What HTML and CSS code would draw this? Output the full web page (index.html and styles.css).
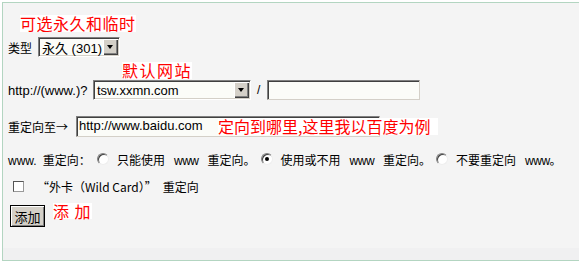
FILE: index.html
```html
<html>
  <head>
    <link rel="stylesheet" href="styles.css">
  </head>
  <body>
    <div class="panel">
      <div class="tip tip_type">可选永久和临时</div>

      <div class="row row_type">
        <span class="label label_type">类型</span>
        <span class="select select_type">
          <span class="select_text">永久 (301)</span>
          <span class="select_btn"></span>
        </span>
      </div><!-- row_type -->

      <div class="tip tip_site">默认网站</div>

      <div class="row row_host">
        <span class="label label_host">http://(www.)?</span>
        <span class="select select_host">
          <span class="select_text">tsw.xxmn.com</span>
          <span class="select_btn"></span>
        </span>
        <span class="slash">/</span>
        <span class="textbox textbox_path"></span>
      </div><!-- row_host -->

      <div class="row row_target">
        <span class="label label_target">重定向至→</span>
        <span class="textbox textbox_target">http://www.baidu.com</span>
        <span class="tip tip_target">定向到哪里,这里我以百度为例</span>
      </div><!-- row_target -->

      <div class="row row_www">
        <span class="opt_title">www.<span class="gap"></span>重定向：</span>
        <span class="radio"></span>
        <span class="opt">只能使用<span class="www">www</span>重定向。</span>
        <span class="radio radio_on"></span>
        <span class="opt">使用或不用<span class="www">www</span>重定向。</span>
        <span class="radio"></span>
        <span class="opt">不要重定向<span class="www">www。</span></span>
      </div><!-- row_www -->

      <div class="row row_wild">
        <span class="checkbox"></span>
        <span class="wild_text">“外卡（Wild Card）”<span class="gap"></span>重定向</span>
      </div><!-- row_wild -->

      <div class="row row_submit">
        <button class="button">添加</button>
        <span class="tip tip_submit">添 加</span>
      </div><!-- row_submit -->
    </div><!-- panel -->
  </body>
</html>
```

FILE: styles.css
```css
body { margin: 0; background: #fff; color: #000; font-family: "Liberation Sans", "Noto Sans CJK SC", sans-serif; font-size: 12px; }

.panel { margin: 2px 0 0 2px; height: 257px; border: 1px solid #b3d5c1; border-right: 0; background: linear-gradient(#f4f4f4 245px, #f0f0f1 245px); }

.tip { width: fit-content; background: #fff; color: #f00; font-family: "Noto Sans CJK SC", sans-serif; font-size: 16px; line-height: 17px; }
.tip_type { margin: 12px 0 0 17px; letter-spacing: 0.5px; }
.tip_site { margin: 5px 0 0 119px; letter-spacing: 1.5px; }
.tip_target { position: absolute; left: 215px; top: 2px; height: 17px; line-height: 17px; padding-right: 8px; }
.tip_submit { margin: 0 0 0 8px; line-height: 16px; letter-spacing: 1px; }

.row { display: flex; align-items: center; padding-left: 5px; }
.row > * { flex: none; }
.row_type { margin-top: 5px; height: 20px; }
.row_host { margin-top: 1px; height: 20px; }
.row_target { margin-top: 16px; height: 21px; position: relative; }
.row_www { margin-top: 15px; height: 14px; }
.row_wild { margin-top: 13px; height: 14px; }
.row_submit { margin-top: 10px; height: 24px; align-items: flex-start; padding-left: 7px; }

.label { white-space: nowrap; }
.label_type { width: 30px; }
.label_host { width: 85px; font-size: 13px; }
.label_target { width: 68px; font-family: "Noto Sans CJK SC", sans-serif; }

.select { display: flex; align-items: center; box-sizing: border-box; height: 20px; padding: 0 1px 0 3px; background: #fbfcf8; border: 1px solid; border-color: #808080 #fff #fff #808080; box-shadow: inset 1px 1px #404040, inset -1px -1px #d4d0c8; }
.select_type { width: 82px; }
.select_host { width: 158px; }
.select_text { flex: 1; font-size: 13px; white-space: nowrap; }
.select_btn { position: relative; width: 15px; height: 16px; background: #d4d0c8; box-shadow: inset 1px 1px #fff, inset -1px -1px #404040, inset -2px -2px #808080; }
.select_btn::after { content: ''; position: absolute; left: 4px; top: 6px; border-style: solid; border-width: 4px 3.5px 0; border-color: #000 transparent transparent; }

.slash { margin: 0 7px 0 6px; }

.textbox { box-sizing: border-box; height: 20px; background: #fbfcf8; border: 1px solid; border-color: #808080 #d4d0c8 #d4d0c8 #808080; box-shadow: inset 1px 1px #404040; font-size: 13px; line-height: 18px; padding-left: 2px; white-space: nowrap; }
.textbox_path { width: 153px; }
.textbox_target { width: 304px; height: 21px; }

.opt_title { width: 89px; white-space: nowrap; }
.gap { display: inline-block; width: 6px; }
.opt { margin: 0 5px 0 8px; white-space: nowrap; }
.www { margin: 0 9px; letter-spacing: -0.5px; }
.radio { position: relative; box-sizing: border-box; width: 12px; height: 12px; border-radius: 50%; background: #fff; border: 1px solid; border-color: #808080 #eee #eee #808080; box-shadow: inset 1px 1px #404040; }
.radio_on::after { content: ''; position: absolute; left: 3px; top: 3px; width: 4px; height: 4px; border-radius: 50%; background: #000; }

.checkbox { box-sizing: border-box; width: 11px; height: 11px; margin-left: 5px; background: #fff; border: 1px solid; border-color: #555 #999 #999 #555; }
.wild_text { margin-left: 13px; white-space: nowrap; font-family: "Noto Sans CJK SC", sans-serif; }

.button { box-sizing: border-box; width: 35px; height: 22px; margin-top: 2px; padding: 0; border: 1px solid #000; background: #d4d0c8; box-shadow: inset 1px 1px #fff, inset -1px -1px #808080; font-family: "Noto Sans CJK SC", sans-serif; font-size: 13px; color: #000; }
```
